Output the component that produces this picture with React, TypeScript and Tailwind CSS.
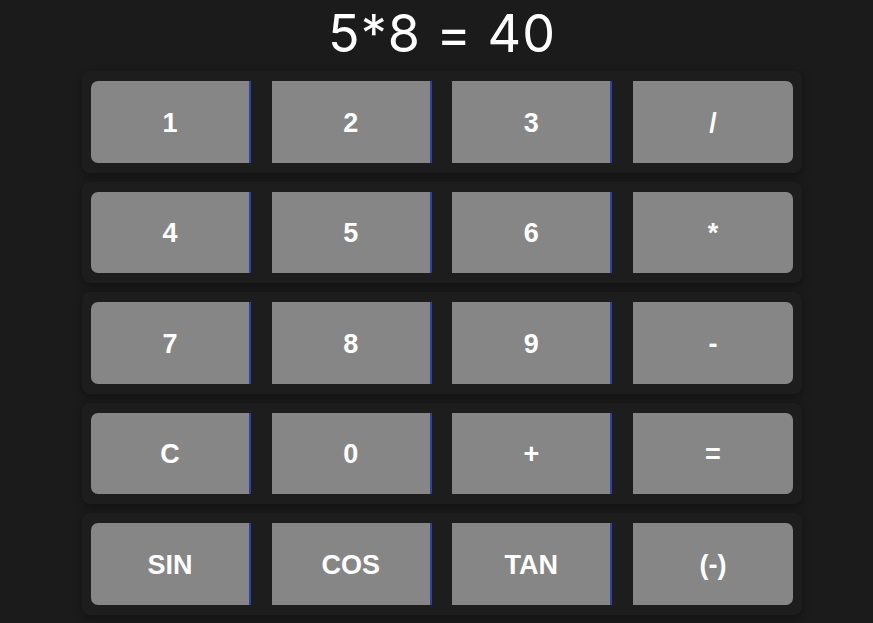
import React from "react";

const rows = [
  ["1", "2", "3", "/"],
  ["4", "5", "6", "*"],
  ["7", "8", "9", "-"],
  ["C", "0", "+", "="],
  ["SIN", "COS", "TAN", "(-)"],
];

export default function App() {
  return (
    <div className="min-h-[623px] w-full bg-[#1b1b1b]">
      <div className="ml-[82px] flex w-[720px] flex-col">
        <div
          className="flex h-[71px] items-center justify-center pb-[3px] text-[52px] leading-none text-white"
          style={{ fontFamily: "Inter, 'Liberation Sans', sans-serif" }}
        >
          <span className="tracking-[1px]">5*8 = 40</span>
        </div>
        <div className="flex flex-col gap-[9px]">
          {rows.map((row, ri) => (
            <div
              key={ri}
              className="flex gap-[20.67px] rounded-lg bg-[#1d1d1d] py-[10px] pl-[9px] shadow-[0_3px_8px_rgba(0,0,0,0.35)]"
            >
              {row.map((label, ci) => (
                <div
                  key={ci}
                  className={
                    "flex h-[81.5px] w-[160px] items-center justify-center bg-[#868686] pt-[2px] text-[27px] font-bold text-white " +
                    (ci === 0 ? "rounded-l-[7px] " : "") +
                    (ci === 3 ? "rounded-r-[7px] " : "border-r-2 border-[#3242a3] ")
                  }
                  style={{ fontFamily: "'Liberation Sans', Arial, sans-serif" }}
                >
                  {label}
                </div>
              ))}
            </div>
          ))}
        </div>
      </div>
    </div>
  );
}
